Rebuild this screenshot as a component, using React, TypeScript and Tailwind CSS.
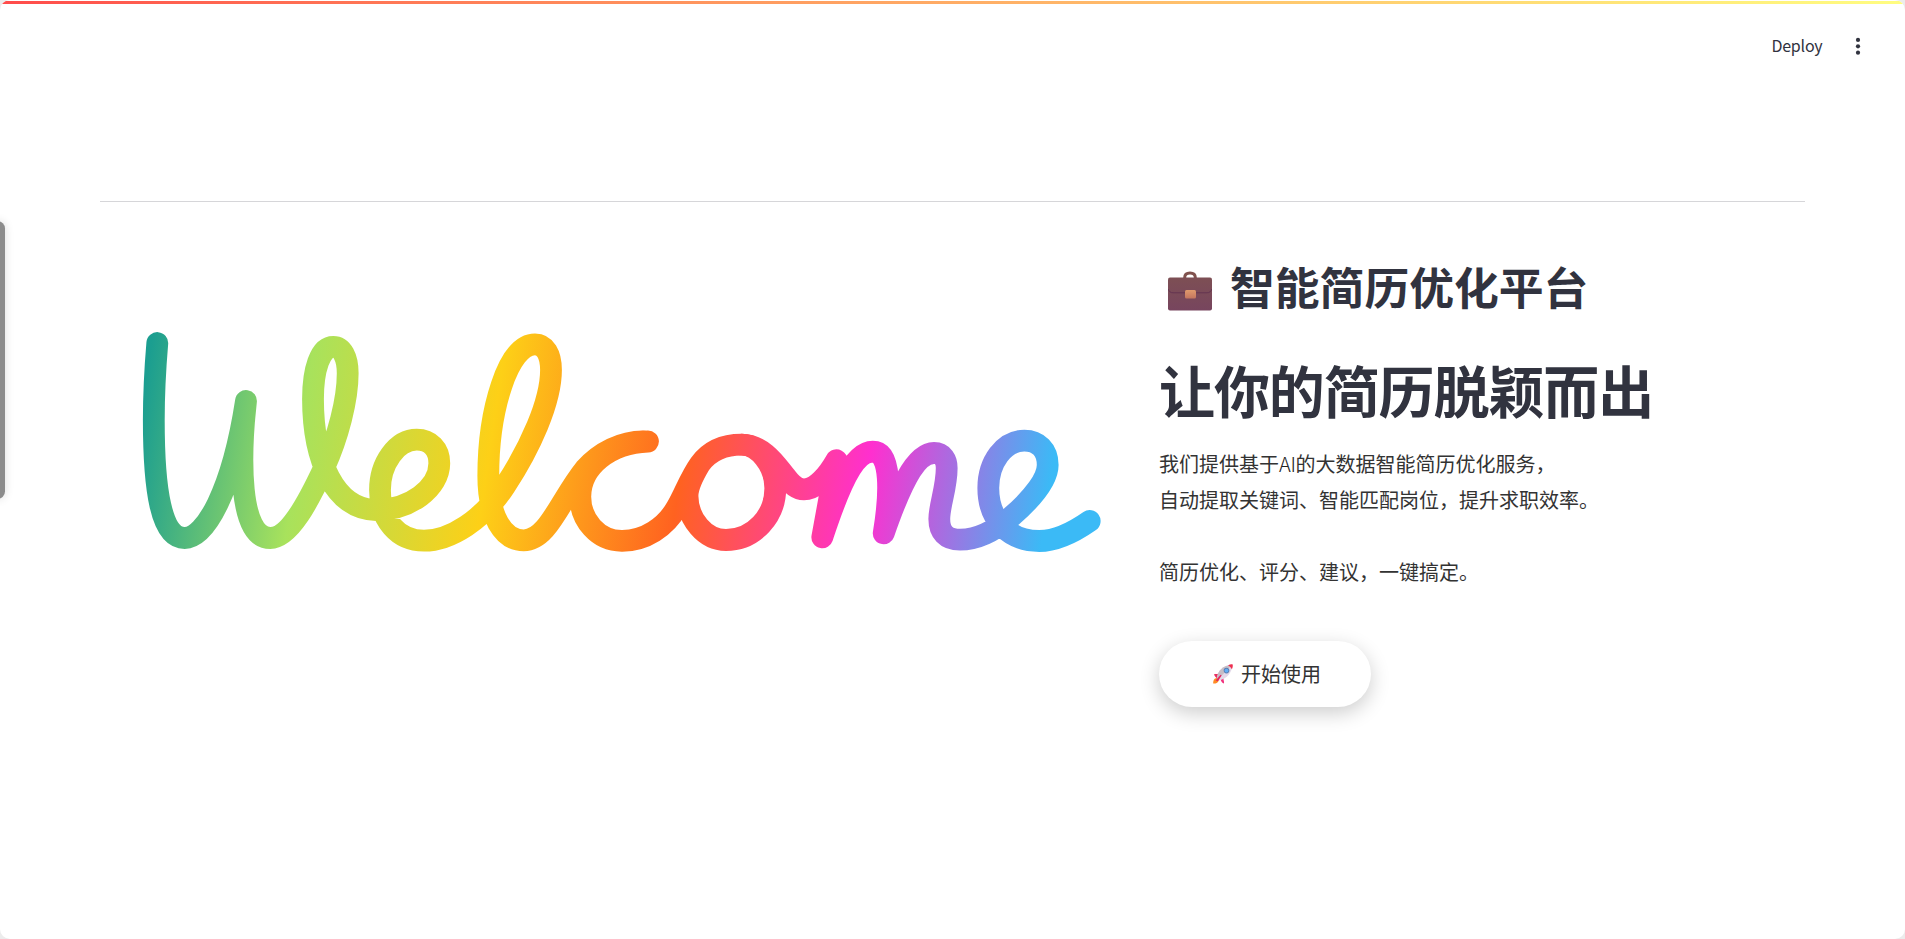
const STROKES = [
  "M157.3 343C154.6 375 153.8 400 153.8 420C153.8 490 161 538 184.7 538C205 538 232 492 246 401C240 455 238 538 270.3 538C290 538 310 498 324 468C338 437 347.7 400 347.7 373.3C347.7 357 342 346.8 333.3 346.8C320 346.8 313 370 313 399C313 460 335 510 376 510C410 510 439.3 488 439.3 463.3C439.3 449 430 439.7 416.7 439.7C397 439.7 380 463 380 490C380 520 398 540.7 424 540.7C450 540.7 483 520 505 486C530 448 551 402 551 370C551 354 545 344.3 535 344.3C508 344.3 488.3 410 488.3 476C488.3 516 503 540.3 523.7 540.3C548 540.3 560 500 585 469C600 452 622 441.3 643 441.3",
  "M648 441.5C610 443 580.3 466 580.3 496.7C580.3 520 598 540.8 621.7 540.8C645 541 666 527 677 507C685 493 690 478 700 464C711 449 727 444.7 741.7 444.7C758 444.7 775.3 465 775.3 488.3C775.3 516 754 540 726 540C705 540 687.5 519 687.5 496C687.5 485 694 474 700 464",
  "M741.7 444.7C765 445 778 468 786 477C792 485 797 489.3 804 489.3C816 489.3 828 475 836.3 460.3L822.3 537.3C833 505 850 451.7 872.7 451.7C892 451.7 890 495 883.7 533.3C897 495 914 453 934 453C943 453 946.7 460 946.7 468C946.7 488 939.3 505 939.3 519C939.3 532 946 539.7 960 539.7C980 539.7 997 529 1012 516C1035 496 1047.7 478 1047.7 465C1047.7 450 1038 440.7 1024.3 440.7C1004 440.7 988.3 462 988.3 488C988.3 520 1009 541 1039.3 541C1057 541 1074 532 1089.7 521",
];

function WelcomeArt() {
  return (
    <svg viewBox="100 202 1020 540" className="h-[540px] w-[1020px] shrink-0" role="img" aria-label="Welcome">
      <defs>
        <linearGradient id="rainbow" gradientUnits="userSpaceOnUse" x1="137" y1="438" x2="1050" y2="574">
          <stop offset="0" stopColor="#1b9e90" />
          <stop offset="0.175" stopColor="#a8e25c" />
          <stop offset="0.38" stopColor="#fdd017" />
          <stop offset="0.588" stopColor="#ff6220" />
          <stop offset="0.789" stopColor="#ff2fcf" />
          <stop offset="0.986" stopColor="#3bbaf6" />
        </linearGradient>
      </defs>
      <g fill="none" stroke="url(#rainbow)" strokeWidth="21.8" strokeLinecap="round" strokeLinejoin="round">
        {STROKES.map((d) => (
          <path key={d} d={d} />
        ))}
      </g>
    </svg>
  );
}

function Briefcase() {
  return (
    <svg viewBox="0 0 44 40" className="mt-[9px] ml-[9px] h-10 w-11 shrink-0" aria-hidden="true">
      <defs>
        <linearGradient id="caseBody" x1="0" y1="0" x2="0" y2="1">
          <stop offset="0" stopColor="#7d4f54" />
          <stop offset="1" stopColor="#77455e" />
        </linearGradient>
        <linearGradient id="caseClasp" x1="0" y1="0" x2="0" y2="1">
          <stop offset="0" stopColor="#e09a6c" />
          <stop offset="1" stopColor="#c4765f" />
        </linearGradient>
      </defs>
      <path d="M16.7 8V6.5C16.7 3.5 19 2 22 2S27.3 3.5 27.3 6.5V8" fill="none" stroke="#80524d" strokeWidth="3" />
      <rect x="0" y="6.5" width="44" height="33" rx="2" fill="url(#caseBody)" />
      <path d="M0 18C1 20.5 2.5 21.8 5 21.8H39C41.5 21.8 43 20.5 44 18" fill="none" stroke="#643451" strokeWidth="1" />
      <rect x="17" y="19" width="11" height="8.5" rx="1.5" fill="url(#caseClasp)" />
    </svg>
  );
}

function Rocket() {
  return (
    <svg viewBox="0 0 20 20" className="h-5 w-5 shrink-0" aria-hidden="true">
      <path d="M4 14C1 14 0 17 .2 19.6C3 19.8 5.5 18.5 5.8 16Z" fill="#ff8a24" />
      <path d="M7 8.8C5 10.5 3 9.8 1 10.2C1.6 12 2.6 13 3.6 14L7 12Z" fill="#e82d61" />
      <path d="M11 12.5C9.5 14.5 11.5 17 11 19.4C9.2 19 8.4 17.6 7.8 16.2L8.5 13Z" fill="#f0307c" />
      <path d="M4 14.2C4.5 7 10 1.2 19 .8C19.4 8.5 14 14.6 6.2 16.5Z" fill="#e2d8e8" />
      <path d="M4 14.2C4.5 7 10 1.2 19 .8L5 15.4Z" fill="#c6bdc6" />
      <path d="M15 1.4C16.5 .4 18.4 .1 19.7 .4C20 2.3 19.6 3.9 18.8 5.2C18 3.4 16.7 2 15 1.4Z" fill="#ee2f50" />
      <circle cx="13.5" cy="6.6" r="2.8" fill="#5a7fb4" />
      <circle cx="13.5" cy="6.6" r="1.9" fill="#62aef5" />
      <path d="M2.6 16.6L7.6 10.8L8.6 11.6L5 17.2Z" fill="#e3265f" />
    </svg>
  );
}

export default function App() {
  return (
    <div className="h-[939px] w-full overflow-hidden bg-[#ececec] font-['Noto_Sans_CJK_SC',sans-serif] text-[#31333f]">
      <div className="relative flex h-full flex-col overflow-hidden rounded-[10px] bg-white pt-px">
        <div className="h-[3px] shrink-0 bg-linear-to-r from-[#ff4b4b] to-[#fffd80]" />
        <header className="flex h-[84px] shrink-0 items-center justify-end pr-[37.5px]">
          <span className="-mt-[3px] text-[16px] leading-6 tracking-[-0.2px]">Deploy</span>
          <svg viewBox="0 0 20 20" className="ml-[25px] h-5 w-5" fill="#31333f" aria-hidden="true">
            <circle cx="10" cy="3.9" r="2.1" />
            <circle cx="10" cy="10.3" r="2.1" />
            <circle cx="10" cy="16.7" r="2.1" />
          </svg>
        </header>
        <main className="mx-[100px] mt-[113px] border-t border-[#d6d6d9]">
          <div className="flex">
            <WelcomeArt />
            <section className="ml-[39px] flex flex-col items-start pt-[54px]">
              <h1 className="flex h-[60px] items-center text-[44.8px] leading-[60px] font-bold whitespace-nowrap">
                <Briefcase />
                <span className="ml-[18px]">智能简历优化平台</span>
              </h1>
              <h2 className="mt-[37px] text-[56px] leading-[72px] font-bold tracking-[-1.1px] whitespace-nowrap">
                让你的简历脱颖而出
              </h2>
              <p className="mt-[21px] text-[20px] leading-9 whitespace-nowrap text-[#333]">
                我们提供基于<span className="font-light tracking-[-0.3px] text-[#222]">AI</span>的大数据智能简历优化服务，
                <br />
                自动提取关键词、智能匹配岗位，提升求职效率。
                <br />
                <br />
                简历优化、评分、建议，一键搞定。
              </p>
              <button className="mt-[51px] flex h-[66px] w-[212px] items-center justify-center gap-2 rounded-full bg-white pb-px pl-1 text-[20px] text-[#333] shadow-[0_6px_20px_rgba(0,0,0,0.2)]">
                <Rocket />
                <span>开始使用</span>
              </button>
            </section>
          </div>
        </main>
        <div className="absolute top-[220.5px] -left-[10px] h-[278px] w-[15px] rounded-lg bg-[#8c8c8c] shadow-[0_0_10px_rgba(0,0,0,0.14)]" />
      </div>
    </div>
  );
}
